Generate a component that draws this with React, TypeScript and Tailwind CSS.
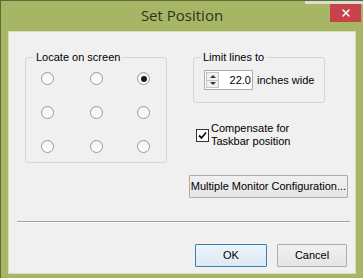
import { X } from 'lucide-react';

function Radio({ checked = false }: { checked?: boolean }) {
  return (
    <span className="w-[13px] h-[13px] rounded-full border border-[#9a9a9a] bg-gradient-to-b from-[#f3f3f3] to-white flex items-center justify-center">
      {checked && <span className="w-[6px] h-[6px] rounded-full bg-[#1a1a1a]" />}
    </span>
  );
}

function Button({ children, primary = false, className = '' }: { children: React.ReactNode; primary?: boolean; className?: string }) {
  return (
    <button
      className={
        'h-[23px] flex items-center justify-center text-[11px] text-black rounded-[1px] border ' +
        (primary
          ? 'border-[#3c7fb1] bg-gradient-to-b from-[#eaf4fb] to-[#dde9f3] '
          : 'border-[#acacac] bg-gradient-to-b from-[#f0f0f0] to-[#e5e5e5] ') +
        className
      }
    >
      {children}
    </button>
  );
}

export default function App() {
  return (
    <div className="w-[363px] h-[278px] bg-[#a7b664] border-t border-l border-[#5f6b35] flex flex-col relative overflow-hidden font-['Liberation_Sans',Arial,sans-serif] select-none">
      {/* desktop peeking through at the top right */}
      <div className="absolute -top-px right-0 w-[58px] h-[4px] bg-[#dcdcd2]" />

      {/* title bar */}
      <div className="h-[30px] flex items-center justify-center relative shrink-0">
        <span className="font-['Open_Sans',sans-serif] text-[15px] text-[#2e3320] -mt-[1px]">Set Position</span>
        <div className="absolute top-[3px] right-[2px] w-[31px] h-[18px] bg-[#c7434b] flex items-center justify-center">
          <X size={12} strokeWidth={3} className="text-white" />
        </div>
      </div>

      {/* client area */}
      <div className="flex-1 ml-[7px] mr-[7px] mb-[4px] bg-[#f0f0f0] border border-[#d6ddb8] flex flex-col text-[11px] leading-[13px] text-black">
        <div className="flex items-start pt-[19px]">
          <fieldset className="ml-[16px] w-[142px] h-[112px] border border-[#d5d5d5] rounded-[3px] p-0 m-0">
            <legend className="ml-[8px] px-[2px]">Locate on screen</legend>
            <div className="grid grid-cols-[49px_47px_13px] gap-y-[21px] pl-[15px] pt-[8px]">
              <Radio />
              <Radio />
              <Radio checked />
              <Radio />
              <Radio />
              <Radio />
              <Radio />
              <Radio />
              <Radio />
            </div>
          </fieldset>

          <div className="ml-[22px] flex flex-col items-start">
            <fieldset className="ml-[4px] w-[132px] h-[52px] border border-[#d5d5d5] rounded-[3px] p-0 m-0">
              <legend className="ml-[7px] px-[2px]">Limit lines to</legend>
              <div className="flex items-center pl-[10px] pt-[6px]">
                <div className="w-[49px] h-[20px] border border-[#abadb3] bg-white flex items-stretch">
                  <div className="w-[13px] my-[1px] ml-[1px] flex flex-col border border-[#c4c4c4] bg-[#f0f0f0]">
                    <div className="flex-1 flex items-center justify-center border-b border-[#c4c4c4]">
                      <span className="w-0 h-0 border-l-[3px] border-r-[3px] border-b-[3px] border-l-transparent border-r-transparent border-b-[#333]" />
                    </div>
                    <div className="flex-1 flex items-center justify-center">
                      <span className="w-0 h-0 border-l-[3px] border-r-[3px] border-t-[3px] border-l-transparent border-r-transparent border-t-[#333]" />
                    </div>
                  </div>
                  <span className="flex-1 flex items-center justify-end pr-[1px]">22.0</span>
                </div>
                <span className="ml-[4px]">inches wide</span>
              </div>
            </fieldset>

            <div className="mt-[19px] ml-[7px] flex items-center">
              <span className="w-[13px] h-[13px] border border-[#333] bg-white flex items-center justify-center">
                <svg width="9" height="9" viewBox="0 0 9 9">
                  <path d="M1 4.5 L3.5 7 L8 1.5" fill="none" stroke="#111" strokeWidth="1.8" />
                </svg>
              </span>
              <span className="ml-[2px]">
                Compensate for
                <br />
                Taskbar position
              </span>
            </div>

            <Button className="mt-[27px] w-[159px] h-[21px]">Multiple Monitor Configuration...</Button>
          </div>
        </div>

        <div className="mt-[23px] ml-[8px] mr-[5px] border-t border-b border-t-[#a0a0a0] border-b-white" />

        <div className="mt-[21px] mr-[8px] flex justify-end gap-[10px]">
          <Button primary className="w-[72px]">OK</Button>
          <Button className="w-[70px]">Cancel</Button>
        </div>
      </div>
    </div>
  );
}
